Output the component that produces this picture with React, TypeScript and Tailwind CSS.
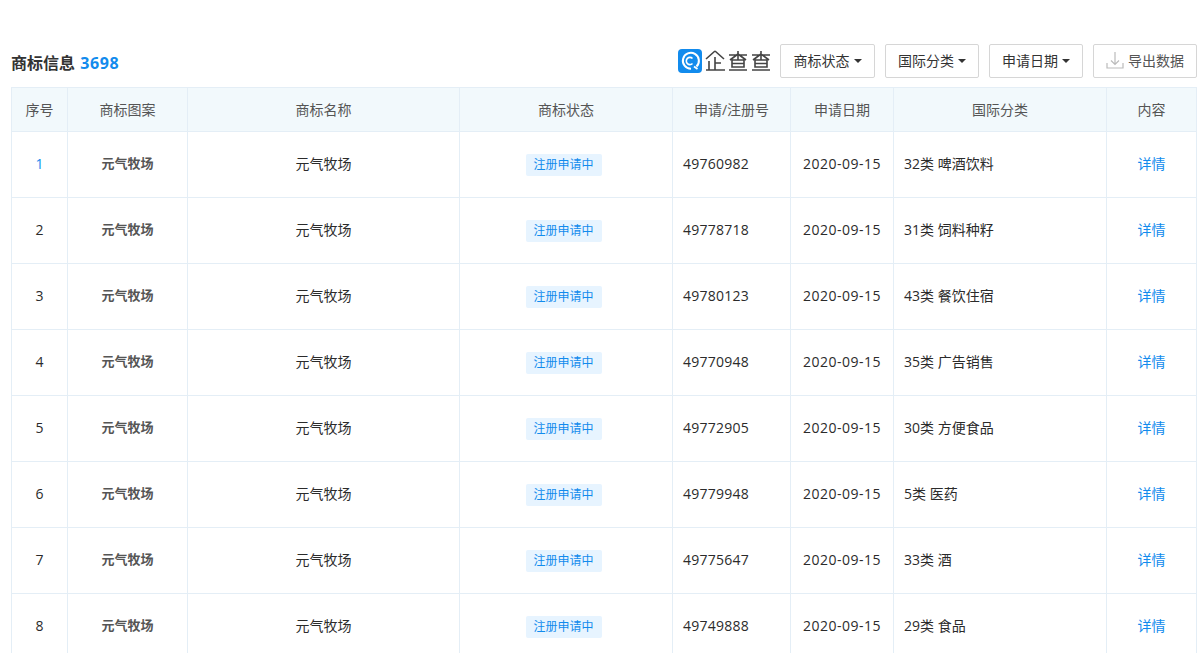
import React from "react";

const rows = [
  ["1", "49760982", "32类 啤酒饮料"],
  ["2", "49778718", "31类 饲料种籽"],
  ["3", "49780123", "43类 餐饮住宿"],
  ["4", "49770948", "35类 广告销售"],
  ["5", "49772905", "30类 方便食品"],
  ["6", "49779948", "5类 医药"],
  ["7", "49775647", "33类 酒"],
  ["8", "49749888", "29类 食品"],
];

const font = { fontFamily: '"Open Sans","Noto Sans CJK SC",sans-serif' };

function Logo() {
  return (
    <div className="flex items-center -mr-[1px]">
      <svg width="24" height="24" viewBox="0 0 24 24">
        <rect width="24" height="24" rx="4" fill="#128bed" />
        <path d="M18.5 17.500A8 8 0 1 0 13 19.800" fill="none" stroke="#fff" strokeWidth="2" />
        <path d="M14.500 9.500a3.600 3.600 0 1 0 0 5" fill="none" stroke="#fff" strokeWidth="1.6" />
        <path d="M16 17.500l3.500 2.500" stroke="#fff" strokeWidth="1.800" />
      </svg>
      <svg width="66" height="24" viewBox="0 0 66 24" className="ml-[3px]" fill="none" stroke="#444" strokeWidth="1.6">
        <path d="M10 2L1 10M10 2l9 8M10 8v13M4 12v9M10 14h6M1 21h19" />
        <path d="M24 6h18M33 2v9M33 5l-8 6M33 5l8 6M27 11h12v7H27zM27 14.500h12M24 21h18" />
        <path d="M47 6h18M56 2v9M56 5l-8 6M56 5l8 6M50 11h12v7H50zM50 14.500h12M47 21h18" />
      </svg>
    </div>
  );
}

function Filter({ label, w }: { label: string; w: string }) {
  return (
    <button className={`${w} h-[34px] ml-[10px] pb-[2px] flex items-center justify-center bg-white border border-[#d6d6d6] rounded-[2px] text-[14px] text-[#333]`}>
      {label}
      <span className="ml-[4px] mt-[2px] w-0 h-0 border-x-[4px] border-x-transparent border-t-[4px] border-t-[#333]" />
    </button>
  );
}

const th = "border border-[#e4eef6] font-normal text-[14px] text-[#555] text-center";
const cell = "border border-[#e4eef6] text-[14px] pb-[2px]";

export default function App() {
  return (
    <div className="h-[653px] overflow-hidden bg-white pt-[44px] pl-[11px] pr-[4px]" style={font}>
      <div className="flex items-center justify-between h-[34px] mb-[9px]">
        <div className="text-[16px] font-semibold text-[#333] leading-[38px] mt-[4px]">
          商标信息 <span className="ml-[1px] font-bold text-[#128bed] tracking-[0.6px]">3698</span>
        </div>
        <div className="flex items-center">
          <Logo />
          <Filter label="商标状态" w="w-[95px]" />
          <Filter label="国际分类" w="w-[94px]" />
          <Filter label="申请日期" w="w-[94px]" />
          <button className="w-[104px] h-[34px] ml-[10px] pb-[2px] flex items-center justify-center bg-white border border-[#d6d6d6] rounded-[2px] text-[14px] text-[#555]">
            <svg width="18" height="18" viewBox="0 0 18 18" fill="none" stroke="#bbb" strokeWidth="1.2" className="mr-[4px]">
              <path d="M9 1v12M5 9.500L9 13.500 13 9.500M1 12v5h16v-5" />
            </svg>
            导出数据
          </button>
        </div>
      </div>
      <table className="table-fixed border-collapse w-[1185px]">
        <colgroup>
          <col className="w-[56px]" />
          <col className="w-[120px]" />
          <col className="w-[272px]" />
          <col className="w-[213px]" />
          <col className="w-[118px]" />
          <col className="w-[103px]" />
          <col className="w-[213px]" />
          <col className="w-[90px]" />
        </colgroup>
        <thead>
          <tr className="h-[44px] bg-[#f2f9fc]">
            {["序号", "商标图案", "商标名称", "商标状态", "申请/注册号", "申请日期", "国际分类", "内容"].map((h) => (
              <th key={h} className={th}>{h}</th>
            ))}
          </tr>
        </thead>
        <tbody>
          {rows.map(([n, reg, cls]) => (
            <tr key={n} className="h-[66px] text-[#2b2b2b]">
              <td className={`${cell} text-center ${n === "1" ? "text-[#128bed]" : ""}`}>{n}</td>
              <td className="border border-[#e4eef6] pb-[2px] text-center text-[13px] font-semibold text-[#555]">元气牧场</td>
              <td className={`${cell} text-center`}>元气牧场</td>
              <td className="border border-[#e4eef6] pb-[1px] text-[14px] text-center">
                <span className="inline-block w-[76px] h-[22px] leading-[22px] mr-[5px] bg-[#e7f4ff] rounded-[2px] text-[12px] text-[#128bed]">注册申请中</span>
              </td>
              <td className={`${cell} pl-[10px] tracking-[0.25px]`}>{reg}</td>
              <td className={`${cell} text-center tracking-[0.5px]`}>2020-09-15</td>
              <td className={`${cell} pl-[10px]`}>{cls}</td>
              <td className={`${cell} text-center text-[#128bed]`}>详情</td>
            </tr>
          ))}
        </tbody>
      </table>
    </div>
  );
}
